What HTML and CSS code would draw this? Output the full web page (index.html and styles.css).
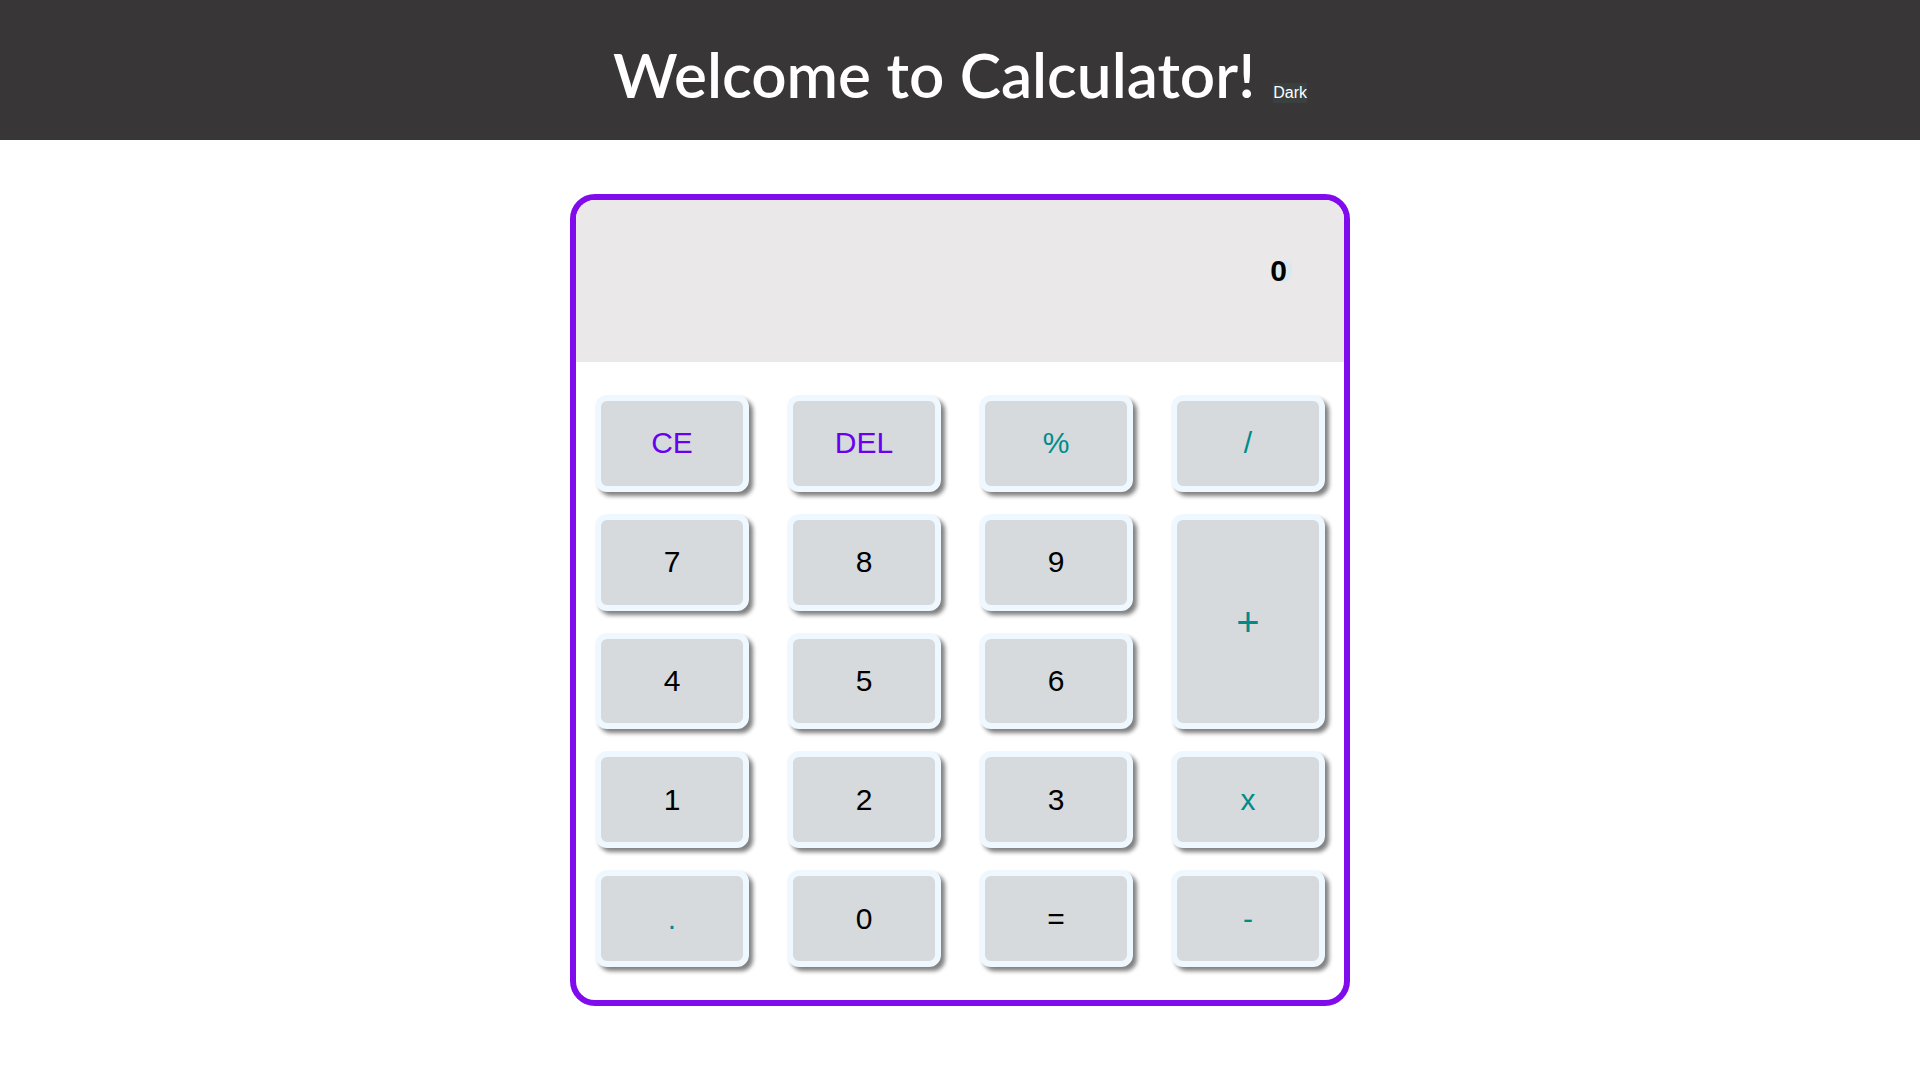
FILE: index.html
```html
<!DOCTYPE html>
<html lang="en">
<head>
<meta charset="utf-8">
<title>Calculator</title>
<link rel="stylesheet" href="styles.css">
</head>
<body>
<header class="header">
  <h1 class="title">Welcome to Calculator!</h1>
  <button class="theme" type="button">Dark</button>
</header>
<main class="calculator">
  <output class="display">0</output>
  <div class="keys">
    <button class="key clear" type="button">CE</button>
    <button class="key clear" type="button">DEL</button>
    <button class="key operator" type="button">%</button>
    <button class="key operator" type="button">/</button>
    <button class="key" type="button">7</button>
    <button class="key" type="button">8</button>
    <button class="key" type="button">9</button>
    <button class="key operator plus" type="button">+</button>
    <button class="key" type="button">4</button>
    <button class="key" type="button">5</button>
    <button class="key" type="button">6</button>
    <button class="key" type="button">1</button>
    <button class="key" type="button">2</button>
    <button class="key" type="button">3</button>
    <button class="key operator" type="button">x</button>
    <button class="key operator" type="button">.</button>
    <button class="key" type="button">0</button>
    <button class="key" type="button">=</button>
    <button class="key operator" type="button">-</button>
  </div>
</main>
</body>
</html>
```
FILE: styles.css
```css
* {
  box-sizing: border-box;
}

body {
  margin: 0;
  background: #fff;
  font-family: Arial, "Liberation Sans", sans-serif;
}

.header {
  display: flex;
  justify-content: center;
  align-items: baseline;
  gap: 18px;
  padding: 34px 16px 26px;
  background: #383637;
  color: #fff;
}

.title {
  margin: 0;
  font: 600 62px/80px "Comic Sans MS", Lato, cursive;
}

.theme {
  padding: 0;
  border: 0;
  background: #3a4040;
  color: #fff;
  font: 16px/20px Arial, "Liberation Sans", sans-serif;
}

.calculator {
  max-width: 780px;
  margin: 54px auto;
  border: 6px solid #800cee;
  border-radius: 25px;
  overflow: hidden;
}

.display {
  display: block;
  min-height: 162px;
  padding: 54px 57px;
  background: #eae8e9;
  color: #000;
  font-size: 30px;
  font-weight: bold;
  line-height: 34px;
  text-align: right;
  text-shadow: 6px 0 2px #d5e9f2;
}

.keys {
  display: grid;
  grid-template-columns: repeat(4, 1fr);
  grid-template-rows: repeat(5, 1fr);
  gap: 22px 38px;
  min-height: 638px;
  padding: 33px 19px;
}

.key {
  padding: 0;
  border: 6px solid aliceblue;
  border-radius: 12px;
  background: #d6dadc;
  box-shadow: 4px 4px 4px #808080;
  color: #000;
  font: 30px/34px Arial, "Liberation Sans", sans-serif;
}

.clear {
  color: #6a00f0;
}

.operator {
  color: #008b8b;
}

.plus {
  grid-row: span 2;
  font-size: 40px;
}
```
